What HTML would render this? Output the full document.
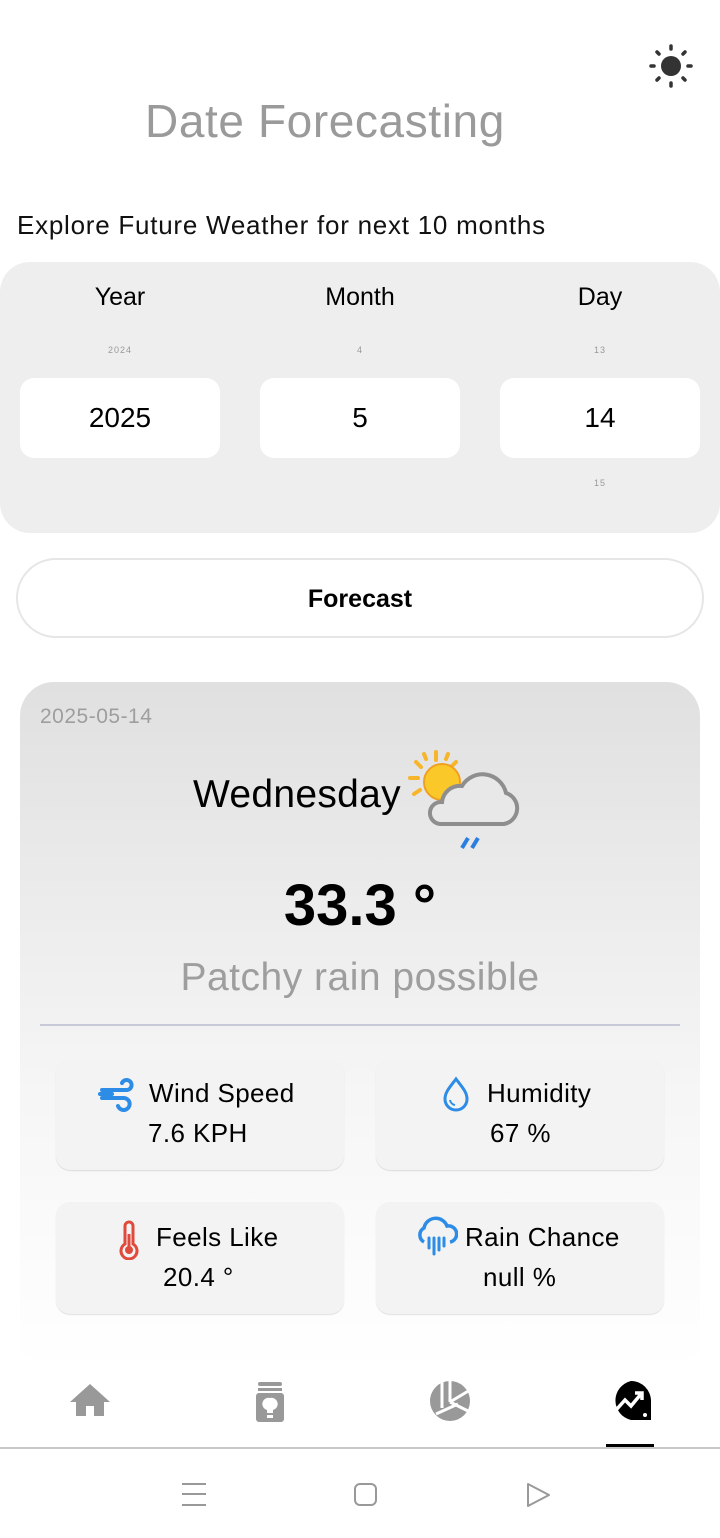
<!DOCTYPE html>
<html><head><meta charset="utf-8"><style>
*{margin:0;padding:0;box-sizing:border-box}
body{width:720px;height:1538px;background:#fff;font-family:"Liberation Sans",Roboto,sans-serif;position:relative;overflow:hidden;color:#000}
.a{position:absolute}
.c{text-align:center}
.box{position:absolute;top:378px;width:200px;height:80px;background:#fff;border-radius:14px;font-size:28px;line-height:80px;text-align:center}
.small{position:absolute;font-size:9px;color:#999;text-align:center;width:200px;letter-spacing:1px}
.tile{position:absolute;width:288px;height:112px;background:#f3f3f3;border-radius:14px;box-shadow:0 1px 1px rgba(0,0,0,.12)}
.tile .t{position:absolute;font-size:26px;white-space:nowrap;letter-spacing:0.4px}
</style></head><body>
<svg class="a" style="left:648px;top:44px" width="46" height="46" viewBox="0 0 46 46"><circle cx="23" cy="22" r="10" fill="#333"/><g stroke="#333" stroke-width="3.5" stroke-linecap="round"><line x1="23" y1="2" x2="23" y2="5"/><line x1="23" y1="39" x2="23" y2="42"/><line x1="3" y1="22" x2="6" y2="22"/><line x1="40" y1="22" x2="43" y2="22"/><line x1="9" y1="8" x2="11" y2="10"/><line x1="35" y1="34" x2="37" y2="36"/><line x1="9" y1="36" x2="11" y2="34"/><line x1="35" y1="10" x2="37" y2="8"/></g></svg>
<div class="a" style="left:145px;top:94px;font-size:46px;letter-spacing:0.6px;color:#9a9a9a">Date Forecasting</div>
<div class="a" style="left:17px;top:210px;font-size:26px;letter-spacing:0.75px;color:#111">Explore Future Weather for next 10 months</div>
<div class="a" style="left:0;top:262px;width:720px;height:271px;background:#eeeeee;border-radius:30px"></div>
<div class="a c" style="left:20px;top:283px;width:200px;font-size:25px">Year</div>
<div class="a c" style="left:260px;top:283px;width:200px;font-size:25px">Month</div>
<div class="a c" style="left:500px;top:283px;width:200px;font-size:25px">Day</div>
<div class="small" style="left:20px;top:345px">2024</div>
<div class="small" style="left:260px;top:345px">4</div>
<div class="small" style="left:500px;top:345px">13</div>
<div class="small" style="left:500px;top:478px">15</div>
<div class="box" style="left:20px">2025</div>
<div class="box" style="left:260px">5</div>
<div class="box" style="left:500px">14</div>
<div class="a c" style="left:16px;top:558px;width:688px;height:80px;border:2px solid #e6e6e6;border-radius:40px;font-size:25px;font-weight:bold;line-height:78px">Forecast</div>
<div class="a" style="left:20px;top:682px;width:680px;height:690px;border-radius:34px;background:linear-gradient(#e0e0e0,#f6f6f6 60%,#fff)"></div>
<div class="a" style="left:40px;top:705px;font-size:21px;letter-spacing:0.5px;color:#9e9e9e">2025-05-14</div>
<div class="a" style="left:193px;top:773px;font-size:39px;letter-spacing:0.3px">Wednesday</div>
<svg class="a" style="left:406px;top:748px" width="116" height="108" viewBox="0 0 116 108"><g stroke="#f6b52a" stroke-width="4" stroke-linecap="round"><line x1="30" y1="4" x2="30" y2="12"/><line x1="10" y1="14" x2="15" y2="19"/><line x1="50" y1="14" x2="45" y2="19"/><line x1="4" y1="30" x2="12" y2="30"/><line x1="8" y1="46" x2="14" y2="42"/><line x1="18" y1="6" x2="20" y2="11"/><line x1="42" y1="6" x2="40" y2="11"/></g><circle cx="36" cy="34" r="18" fill="#fbc82a" stroke="#f0a020" stroke-width="2"/><path d="M34 76 H98 A16 16 0 0 0 100 45 A24 24 0 0 0 56 38 A18 18 0 0 0 36 54 A11 11 0 0 0 34 76Z" fill="#e8e8e8" stroke="#8e8e8e" stroke-width="4"/><g stroke="#2a7ee0" stroke-width="4"><line x1="56" y1="100" x2="62" y2="90"/><line x1="66" y1="100" x2="72" y2="90"/></g></svg>
<div class="a c" style="left:0;top:872px;width:720px;font-size:58px;font-weight:bold">33.3 °</div>
<div class="a c" style="left:0;top:956px;width:720px;font-size:39px;letter-spacing:0.5px;color:#9e9e9e">Patchy rain possible</div>
<div class="a" style="left:40px;top:1024px;width:640px;height:2px;background:#c7c9d6"></div>
<div class="tile" style="left:56px;top:1058px"><svg class="a" style="left:42px;top:20px" width="40" height="34" viewBox="0 0 40 34"><path d="M4 12 H28 A5 5 0 1 0 24 5 M4 20 H26 A6 6 0 1 1 20 28 M2 16 H14" fill="none" stroke="#2d8ce6" stroke-width="4" stroke-linecap="round"/></svg><div class="t" style="left:93px;top:20px">Wind Speed</div><div class="t" style="left:92px;top:60px">7.6 KPH</div></div>
<div class="tile" style="left:376px;top:1058px"><svg class="a" style="left:64px;top:18px" width="32" height="36" viewBox="0 0 32 36"><path d="M16 3 C10 11 5 16 5 23 A11 11 0 0 0 27 23 C27 16 22 11 16 3Z" fill="none" stroke="#2d8ce6" stroke-width="3"/><path d="M10 24 A6 6 0 0 0 15 29" fill="none" stroke="#2d8ce6" stroke-width="2"/></svg><div class="t" style="left:111px;top:20px">Humidity</div><div class="t" style="left:114px;top:60px">67 %</div></div>
<div class="tile" style="left:56px;top:1202px"><svg class="a" style="left:62px;top:18px" width="22" height="40" viewBox="0 0 22 40"><path d="M7 6 A4 4 0 0 1 15 6 V24 A8 8 0 1 1 7 24Z" fill="none" stroke="#e04a3c" stroke-width="3"/><circle cx="11" cy="30" r="4" fill="#e04a3c"/><line x1="11" y1="14" x2="11" y2="28" stroke="#e04a3c" stroke-width="3"/></svg><div class="t" style="left:100px;top:20px">Feels Like</div><div class="t" style="left:107px;top:60px">20.4 °</div></div>
<div class="tile" style="left:376px;top:1202px"><svg class="a" style="left:38px;top:14px" width="44" height="44" viewBox="0 0 44 44"><path d="M10 26 A8 8 0 0 1 10 12 A12 12 0 0 1 33 10 A8 8 0 0 1 36 26" fill="none" stroke="#2d8ce6" stroke-width="3.5"/><g stroke="#2d8ce6" stroke-width="3" stroke-linecap="round"><line x1="15" y1="22" x2="15" y2="32"/><line x1="20" y1="22" x2="20" y2="38"/><line x1="25" y1="22" x2="25" y2="34"/><line x1="30" y1="22" x2="30" y2="30"/></g></svg><div class="t" style="left:89px;top:20px">Rain Chance</div><div class="t" style="left:107px;top:60px">null %</div></div>
<svg class="a" style="left:70px;top:1382px" width="40" height="36" viewBox="0 0 40 36"><path d="M20 2 L40 20 H34 V34 H24 V24 H16 V34 H6 V20 H0Z" fill="#999"/></svg>
<svg class="a" style="left:254px;top:1382px" width="32" height="40" viewBox="0 0 32 40"><rect x="4" y="0" width="24" height="4" rx="2" fill="#999"/><rect x="4" y="6" width="24" height="3" fill="#999"/><rect x="2" y="11" width="28" height="29" rx="3" fill="#999"/><path d="M16 16 A6 6 0 0 1 19 28 V31 H13 V28 A6 6 0 0 1 16 16Z M13 33 H19 V36 H13Z" fill="#fff"/></svg>
<svg class="a" style="left:428px;top:1380px" width="44" height="42" viewBox="0 0 44 42"><circle cx="22" cy="21" r="20" fill="#999"/><g stroke="#fff" stroke-width="3"><line x1="14" y1="2" x2="14" y2="28"/><line x1="22" y1="1" x2="22" y2="22"/><line x1="22" y1="22" x2="42" y2="10"/><line x1="22" y1="22" x2="42" y2="32"/><line x1="8" y1="34" x2="30" y2="24"/></g></svg>
<svg class="a" style="left:610px;top:1380px" width="42" height="42" viewBox="0 0 42 42"><path d="M21 1 A20 20 0 0 1 41 21 V40 H21 A20 20 0 0 1 21 1Z" fill="#000"/><path d="M6 30 L15 20 L21 26 L31 14 M25 13 H32 V20" fill="none" stroke="#fff" stroke-width="3.5"/><circle cx="35" cy="35" r="2" fill="#fff"/></svg>
<div class="a" style="left:606px;top:1444px;width:48px;height:5px;background:#000"></div>
<div class="a" style="left:0;top:1447px;width:720px;height:2px;background:#c8c8c8"></div>
<svg class="a" style="left:180px;top:1482px" width="28" height="26"><g stroke="#999" stroke-width="2"><line x1="2" y1="2" x2="26" y2="2"/><line x1="2" y1="12" x2="26" y2="12"/><line x1="2" y1="23" x2="26" y2="23"/></g></svg>
<svg class="a" style="left:353px;top:1482px" width="26" height="26"><rect x="2" y="2" width="21" height="21" rx="5" fill="none" stroke="#999" stroke-width="2"/></svg>
<svg class="a" style="left:526px;top:1482px" width="26" height="26"><path d="M2 2 L23 13 L2 24Z" fill="none" stroke="#999" stroke-width="2" stroke-linejoin="round"/></svg>
</body></html>
